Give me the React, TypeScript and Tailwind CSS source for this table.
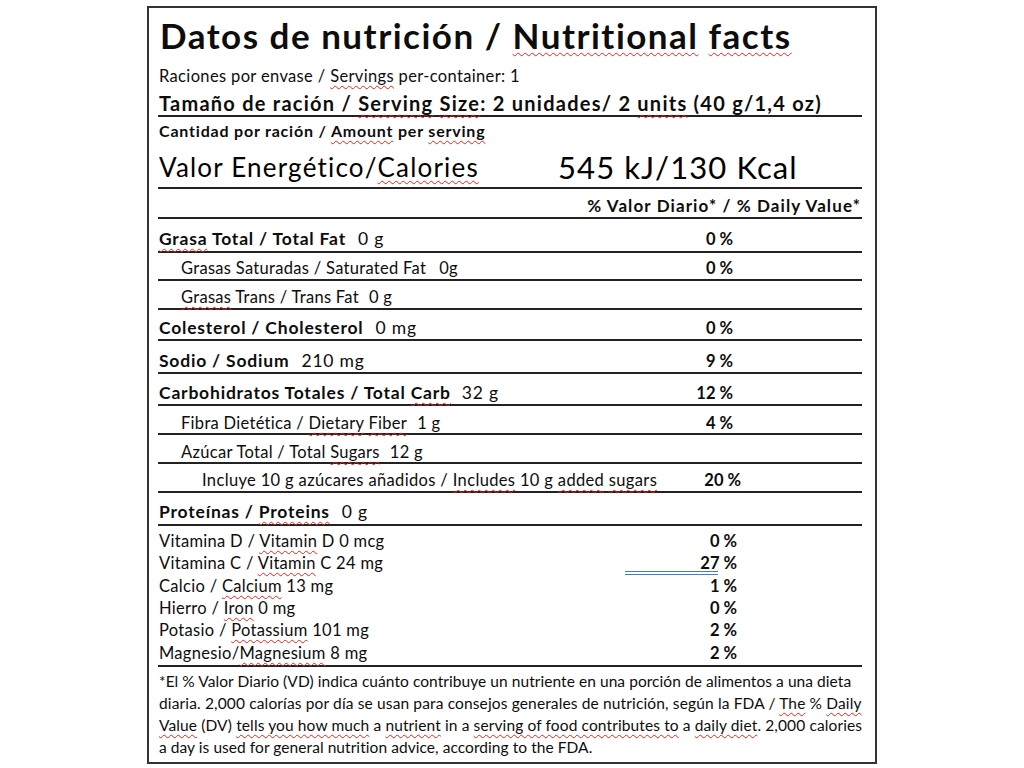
import React from "react";

const S = ({ children }: { children: React.ReactNode }) => (
  <span className="underline decoration-wavy decoration-[#e3261c] decoration-1 underline-offset-[3px] [text-decoration-skip-ink:none]">
    {children}
  </span>
);

const Row = ({
  h,
  label,
  pct,
  indent = "",
  pctClass = "",
  pt = "",
}: {
  h: string;
  label: React.ReactNode;
  pct?: string;
  indent?: string;
  pctClass?: string;
  pt?: string;
}) => (
  <div className={`flex items-center border-b-2 border-[#222] ${h} ${pt}`}>
    <div className={`flex-1 min-w-0 whitespace-nowrap ${indent}`}>{label}</div>
    <div className={`w-[100px] shrink-0 text-right font-bold text-[16.5px] ${pctClass}`}>{pct}</div>
    <div className="w-[129px] shrink-0" />
  </div>
);

const VRow = ({ label, pct }: { label: React.ReactNode; pct: string }) => (
  <div className="flex h-[22.4px] items-center">
    <div className="flex-1 min-w-0 whitespace-nowrap">{label}</div>
    <div className="w-[100px] shrink-0 text-right font-bold text-[16.5px] tracking-normal">{pct}</div>
    <div className="w-[125px] shrink-0" />
  </div>
);

const bigLabel = "text-[17.5px] tracking-[0.8px]";
const smallLabel = "text-[16.5px] tracking-[0.3px]";

export default function App() {
  return (
    <div className="w-[1024px] h-[768px] bg-white pt-[6px] font-['Lato',sans-serif] text-[#0d0d0d]">
      <div className="ml-[147px] w-[730px] h-[758px] border-2 border-[#333] pl-[9px] pr-[13px]">
        {/* title block */}
        <div className="border-b-2 border-[#222] h-[109px] whitespace-nowrap">
          <div className="text-[35px] font-bold leading-none pt-[10px] pl-[2px] tracking-[1.5px]">
            Datos de nutrición / <S>Nutritional</S> <S>facts</S>
          </div>
          <div className="text-[16.5px] leading-[20px] mt-[13px] pl-[1px] tracking-[0.35px]">
            Raciones por envase / <S>Servings</S> per-container: 1
          </div>
          <div className="text-[20px] font-bold leading-[24px] mt-[5px] pl-[1px] tracking-[1.25px]">
            Tamaño de ración / <S>Serving</S> <S>Size</S>: 2 unidades/ 2 <S>units</S> (40 g/1,4 oz)
          </div>
        </div>
        {/* energy block */}
        <div className="border-b-2 border-[#222] h-[72px] pl-[1px] whitespace-nowrap">
          <div className="text-[16px] font-bold leading-[20px] pt-[4px] tracking-[0.8px]">
            Cantidad por ración / <S>Amount</S> per <S>serving</S>
          </div>
          <div className="flex items-center h-[40px] mt-[6px]">
            <div className="w-[399px] shrink-0 text-[26px] leading-none tracking-[1.2px] text-black">
              Valor Energético/<S>Calories</S>
            </div>
            <div className="text-[31px] leading-none tracking-[1.1px] text-black">545 kJ/130 Kcal</div>
          </div>
        </div>
        {/* header */}
        <div className="border-b-2 border-[#222] h-[30px] pt-[6px] flex items-center justify-end pr-[1px]">
          <div className="text-[17px] font-bold tracking-[1.1px] whitespace-nowrap">
            % Valor Diario* / % Daily Value*
          </div>
        </div>
        <Row
          h="h-[34px]"
          pt="pt-[8px]"
          indent="pl-[1px]"
          label={
            <span className={bigLabel}>
              <b>
                <S>Grasa</S> Total / Total Fat
              </b>
              <span className="ml-[12px]">0 g</span>
            </span>
          }
          pct="0 %"
        />
        <Row
          h="h-[28px]"
          pt="pt-[4px]"
          indent="pl-[23px]"
          label={
            <span className={smallLabel}>
              Grasas Saturadas / Saturated Fat<span className="ml-[13px]">0g</span>
            </span>
          }
          pct="0 %"
        />
        <Row
          h="h-[29px]"
          pt="pt-[5px]"
          indent="pl-[23px]"
          label={
            <span className={smallLabel}>
              <S>Grasas</S> Trans / Trans Fat<span className="ml-[10px]">0 g</span>
            </span>
          }
        />
        <Row
          h="h-[31px]"
          pt="pt-[7px]"
          indent="pl-[1px]"
          label={
            <span className={bigLabel}>
              <b>Colesterol / Cholesterol</b>
              <span className="ml-[12px]">0 mg</span>
            </span>
          }
          pct="0 %"
        />
        <Row
          h="h-[33px]"
          pt="pt-[9px]"
          indent="pl-[1px]"
          label={
            <span className={bigLabel}>
              <b>Sodio / Sodium</b>
              <span className="ml-[12px]">210 mg</span>
            </span>
          }
          pct="9 %"
        />
        <Row
          h="h-[32px]"
          pt="pt-[8px]"
          indent="pl-[1px]"
          label={
            <span className={bigLabel}>
              <b>
                Carbohidratos Totales / Total <S>Carb</S>
              </b>
              <span className="ml-[11px]">32 g</span>
            </span>
          }
          pct="12 %"
        />
        <Row
          h="h-[29px]"
          pt="pt-[7px]"
          indent="pl-[23px]"
          label={
            <span className={smallLabel}>
              Fibra Dietética / <S>Dietary</S> <S>Fiber</S>
              <span className="ml-[10px]">1 g</span>
            </span>
          }
          pct="4 %"
        />
        <Row
          h="h-[29px]"
          pt="pt-[7px]"
          indent="pl-[23px]"
          label={
            <span className={smallLabel}>
              Azúcar Total / Total <S>Sugars</S>
              <span className="ml-[10px]">12 g</span>
            </span>
          }
        />
        <Row
          h="h-[29px]"
          pt="pt-[6px]"
          indent="pl-[44px]"
          label={
            <span className={`${smallLabel} tracking-[0.35px]`}>
              Incluye 10 g azúcares añadidos / <S>Includes</S> 10 g <S>added</S> <S>sugars</S>
            </span>
          }
          pct="20 %"
          pctClass="mr-[-8px]"
        />
        <Row
          h="h-[33px]"
          pt="pt-[7px]"
          indent="pl-[1px]"
          label={
            <span className={bigLabel}>
              <b>
                Proteínas / <S>Proteins</S>
              </b>
              <span className="ml-[12px]">0 g</span>
            </span>
          }
        />
        {/* vitamins */}
        <div className={`border-b-2 border-[#222] h-[141px] pt-[4px] pl-[1px] ${smallLabel}`}>
          <VRow label={<>Vitamina D / <S>Vitamin</S> D 0 mcg</>} pct="0 %" />
          <div className="relative">
            <VRow label={<>Vitamina C / <S>Vitamin</S> C 24 mg</>} pct="27 %" />
            <div className="absolute left-[466px] top-[19px] w-[93px] h-[4px] border-y border-[#3b7fd6]" />
          </div>
          <VRow label={<>Calcio / <S>Calcium</S> 13 mg</>} pct="1 %" />
          <VRow label={<>Hierro / <S>Iron</S> 0 mg</>} pct="0 %" />
          <VRow label={<>Potasio / <S>Potassium</S> 101 mg</>} pct="2 %" />
          <VRow label={<>Magnesio/<S>Magnesium</S> 8 mg</>} pct="2 %" />
        </div>
        {/* footnote */}
        <div className="text-[15.5px] leading-[22px] pt-[3px] pl-[1px] whitespace-nowrap tracking-[0.06px]">
          *El % Valor Diario (VD) indica cuánto contribuye un nutriente en una porción de alimentos a una dieta
          <br />
          <span className="tracking-[0.14px]">
            diaria. 2,000 calorías por día se usan para consejos generales de nutrición, según la FDA / <S>The</S> %{" "}
            <S>Daily</S>
          </span>
          <br />
          <span className="tracking-[0.12px]">
            <S>Value</S> (DV) <S>tells you how much</S> a <S>nutrient</S> in a <S>serving of food contributes to</S> a{" "}
            <S>daily diet</S>. 2,000 calories
          </span>
          <br />a day is used for general nutrition advice, according to the FDA.
        </div>
      </div>
    </div>
  );
}
